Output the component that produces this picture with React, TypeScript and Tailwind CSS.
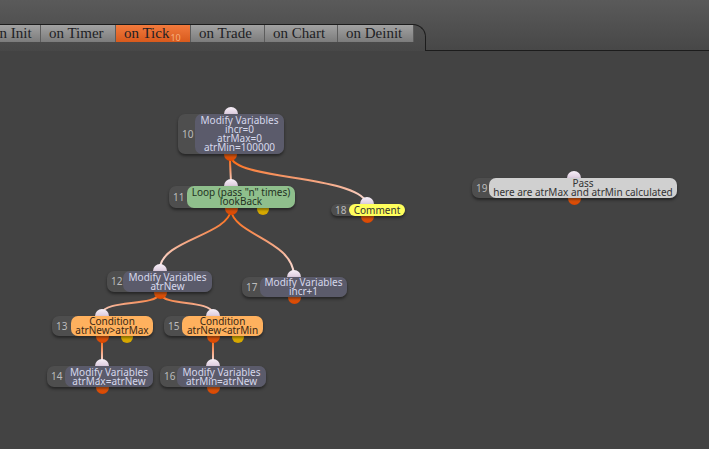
type Kind = "var" | "loop" | "comment" | "pass" | "cond";

interface FlowNode {
  id: number;
  x: number;
  y: number;
  w: number;
  h: number;
  off: number;
  kind: Kind;
  lines: string[];
  top: number;
  bottom: number;
  yellow?: number;
}

const kinds: Record<Kind, string> = {
  var: "bg-[#5b5b6b] text-[#d6d8ec]",
  loop: "bg-[#8fbf8c] text-[#24321f]",
  comment: "bg-[#ffff5c] text-[#333333]",
  pass: "bg-[#d0d0d0] text-[#333333]",
  cond: "bg-[#ffb15e] text-[#3a2814]",
};

const nodes: FlowNode[] = [
  { id: 10, x: 178, y: 114, w: 106, h: 40, off: 17, kind: "var", lines: ["Modify Variables", "incr=0", "atrMax=0", "atrMin=100000"], top: 231, bottom: 230 },
  { id: 11, x: 169, y: 186, w: 126, h: 22, off: 18, kind: "loop", lines: ['Loop (pass "n" times)', "lookBack"], top: 231, bottom: 231, yellow: 263 },
  { id: 18, x: 331, y: 204, w: 74, h: 12, off: 18, kind: "comment", lines: ["Comment"], top: 367, bottom: 367 },
  { id: 19, x: 472, y: 178, w: 205, h: 20, off: 17, kind: "pass", lines: ["Pass", "here are atrMax and atrMin calculated"], top: 574, bottom: 574 },
  { id: 12, x: 107, y: 271, w: 105, h: 21, off: 16, kind: "var", lines: ["Modify Variables", "atrNew"], top: 160, bottom: 160 },
  { id: 17, x: 242, y: 277, w: 105, h: 20, off: 18, kind: "var", lines: ["Modify Variables", "incr+1"], top: 294, bottom: 294 },
  { id: 13, x: 52, y: 316, w: 101, h: 20, off: 19, kind: "cond", lines: ["Condition", "atrNew>atrMax"], top: 102, bottom: 102, yellow: 127 },
  { id: 15, x: 164, y: 316, w: 99, h: 20, off: 18, kind: "cond", lines: ["Condition", "atrNew<atrMin"], top: 213, bottom: 213, yellow: 238 },
  { id: 14, x: 47, y: 366, w: 106, h: 21, off: 18, kind: "var", lines: ["Modify Variables", "atrMax=atrNew"], top: 102, bottom: 102 },
  { id: 16, x: 160, y: 366, w: 106, h: 21, off: 17, kind: "var", lines: ["Modify Variables", "atrMin=atrNew"], top: 213, bottom: 213 },
];

// [path, y start, y end]
const edges: [string, number, number][] = [
  ["M230,157 C230,170 231,175 231,186", 157, 186],
  ["M231,157 C235,180 355,175 367,203", 157, 203],
  ["M231,210 C228,235 162,240 160,268", 210, 268],
  ["M231,210 C234,235 292,240 294,275", 210, 275],
  ["M160,294 C155,306 105,300 102,313", 294, 313],
  ["M160,294 C165,306 210,300 213,313", 294, 313],
  ["M102,339 L102,363", 339, 363],
  ["M213,339 L213,363", 339, 363],
];

const tabs: { label: string; w: string }[] = [
  { label: "on Init", w: "w-[57px]" },
  { label: "on Timer", w: "w-[75px]" },
  { label: "on Tick", w: "w-[75px]" },
  { label: "on Trade", w: "w-[74px]" },
  { label: "on Chart", w: "w-[73px]" },
  { label: "on Deinit", w: "w-[76px]" },
];

function Node({ n }: { n: FlowNode }) {
  return (
    <div className="absolute" style={{ left: n.x, top: n.y - 51, width: n.w, height: n.h }}>
      <div
        className="absolute w-[14px] h-[14px] rounded-full bg-gradient-to-b from-[#f8f0f8] to-[#c0a8c4]"
        style={{ left: n.top - n.x - 7, top: -7 }}
      />
      <div
        className="absolute w-[13px] h-[13px] rounded-full bg-gradient-to-b from-[#ff7a20] to-[#d84400]"
        style={{ left: n.bottom - n.x - 6, bottom: -7 }}
      />
      {n.yellow && (
        <div
          className="absolute w-[12px] h-[12px] rounded-full bg-gradient-to-b from-[#ffd800] to-[#d0a000]"
          style={{ left: n.yellow - n.x - 6, bottom: -7 }}
        />
      )}
      <div className="relative flex h-full rounded-[7px] bg-[#4e4e4e] shadow-[0_2px_3px_rgba(0,0,0,0.45)]">
        <div className="flex items-center pl-[4px] text-[10px] text-[#bcbcbc]" style={{ width: n.off }}>
          {n.id}
        </div>
        <div
          className={
            "flex-1 flex flex-col items-center justify-center rounded-[7px] text-[10px] leading-[10px] whitespace-nowrap " +
            kinds[n.kind]
          }
        >
          {n.lines.map((l, i) => (
            <div key={i} className="h-[9px] leading-[9px]">{l}</div>
          ))}
        </div>
      </div>
    </div>
  );
}

export default function App() {
  return (
    <div className="w-[709px] h-[449px] overflow-hidden bg-[#434343] font-['Noto_Sans',sans-serif]">
      <div className="flex items-end h-[51px] bg-gradient-to-b from-[#5a5a5a] to-[#474747]">
        <div className="w-[426px] h-[27px] border-t border-r border-[#1c1c1c] rounded-tr-[13px] overflow-hidden">
          <div className="flex -ml-[16px] font-['Liberation_Serif',serif] text-[15px] leading-[17px] text-[#1e1e24]">
            {tabs.map((t) => (
              <div
                key={t.label}
                className={
                  t.w +
                  " shrink-0 h-[17px] pl-[8px] border-r border-[#5c5c5c] whitespace-nowrap " +
                  (t.label === "on Tick"
                    ? "bg-gradient-to-b from-[#f27a3c] to-[#d85a1c]"
                    : "bg-gradient-to-b from-[#a2a2a2] to-[#7c7c7c]")
                }
              >
                {t.label}
                {t.label === "on Tick" && (
                  <span className="ml-[1px] font-['Noto_Sans',sans-serif] text-[9px] text-[#f6b080] relative top-[3px]">10</span>
                )}
              </div>
            ))}
          </div>
        </div>
        <div className="flex-1 h-full border-b border-[#1c1c1c]" />
      </div>
      <div className="relative h-[398px]">
        <svg className="absolute inset-0" width="709" height="398" viewBox="0 51 709 398" fill="none">
          <defs>
            {edges.map(([, y1, y2], i) => (
              <linearGradient key={i} id={"e" + i} gradientUnits="userSpaceOnUse" x1="0" y1={y1} x2="0" y2={y2}>
                <stop offset="0" stopColor="#ff6200" />
                <stop offset="0.45" stopColor="#f59a6e" />
                <stop offset="1" stopColor="#fbe4e2" />
              </linearGradient>
            ))}
          </defs>
          {edges.map(([d], i) => (
            <path key={i} d={d} stroke={"url(#e" + i + ")"} strokeWidth="2" />
          ))}
        </svg>
        {nodes.map((n) => (
          <Node key={n.id} n={n} />
        ))}
      </div>
    </div>
  );
}
